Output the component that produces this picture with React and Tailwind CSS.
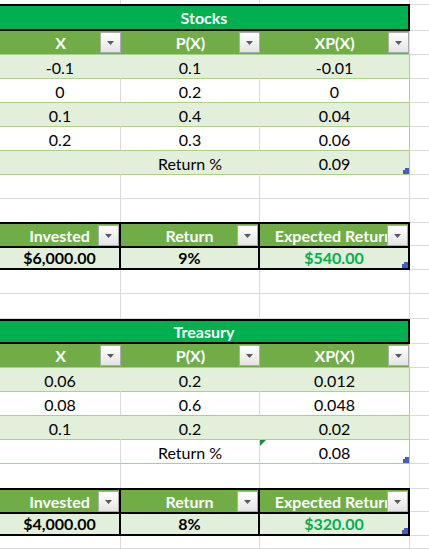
import React from 'react';

const W = ['w-[121px]', 'w-[139px]', 'w-[150px]'];

const stocks = [
  ['-0.1', '0.1', '-0.01'],
  ['0', '0.2', '0'],
  ['0.1', '0.4', '0.04'],
  ['0.2', '0.3', '0.06'],
  ['', 'Return %', '0.09'],
];

const treasury = [
  ['0.06', '0.2', '0.012'],
  ['0.08', '0.6', '0.048'],
  ['0.1', '0.2', '0.02'],
  ['', 'Return %', '0.08'],
];

// excel autofilter arrow button
const Drop = () => (
  <div className="absolute right-0 top-[1px] w-[21px] h-[21px] border border-[#acacac] bg-linear-to-b from-white to-[#e4e4e4] flex items-center justify-center">
    <svg width="7" height="4" viewBox="0 0 7 4">
      <polygon points="0,0 7,0 3.5,4" fill="#595959" />
    </svg>
  </div>
);

const Handle = () => (
  <svg className="absolute right-0 bottom-0" width="6" height="6" viewBox="0 0 6 6">
    <polygon points="2,0 6,0 6,6 0,6 0,2 2,2" fill="#4a5bbf" />
  </svg>
);

const Blank = ({ h = 'h-[24px]', line = true }) => {
  const b = line ? 'border-b' : '';
  return (
    <div className={`flex ${h}`}>
      <div className={`w-[121px] border-r ${b} border-[#dadada]`} />
      <div className={`w-[139px] border-r ${b} border-[#dadada]`} />
      <div className={`w-[150px] border-r ${b} border-[#dadada]`} />
      <div className={`flex-1 ${b} border-[#dadada]`} />
    </div>
  );
};

const Title = ({ label, h, top }) => (
  <div className={`flex ${h}`}>
    <div className="w-[410px] flex items-center justify-center bg-[#00b050] border-y-2 border-r-2 border-black text-white font-bold">
      {label}
    </div>
    <div className={`flex-1 border-b ${top ? 'border-t' : ''} border-[#dadada]`} />
  </div>
);

const Header = ({ cols }) => (
  <div className="flex h-[24px]">
    {cols.map((c, i) => (
      <div
        key={c}
        className={`${W[i]} relative flex items-center justify-center bg-[#70ad47] border-b border-b-[#a9d08e] text-white font-bold ${i === 2 ? 'border-r border-r-[#dadada]' : ''}`}
      >
        {c}
        <Drop />
      </div>
    ))}
    <div className="flex-1 border-b border-[#dadada]" />
  </div>
);

const DataRow = ({ vals, band, last, flag }) => {
  const bg = band ? 'bg-[#e2efda] border-r-[#e2efda]' : 'bg-white border-r-[#dadada]';
  return (
    <div className="flex h-[24px]">
      <div className={`w-[121px] flex items-end justify-center pb-[1px] border-r border-b border-b-[#a9d08e] ${bg}`}>{vals[0]}</div>
      <div className={`w-[139px] flex items-end justify-center pb-[1px] border-r border-b border-b-[#a9d08e] ${bg}`}>{vals[1]}</div>
      <div className={`w-[150px] relative flex items-end justify-center pb-[1px] border-r border-b border-[#a9d08e] ${band ? 'bg-[#e2efda]' : 'bg-white'}`}>
        {flag && (
          <svg className="absolute left-0 top-0" width="6" height="6" viewBox="0 0 6 6">
            <polygon points="0,0 6,0 0,6" fill="#1e8a3c" />
          </svg>
        )}
        {vals[2]}
        {last && <Handle />}
      </div>
      <div className="flex-1 border-b border-[#dadada]" />
    </div>
  );
};

const Invested = ({ amount, pct, ret }) => (
  <>
    <div className="flex h-[24px]">
      {['Invested', 'Return', 'Expected Return'].map((c, i) => (
        <div
          key={c}
          className={`${W[i]} relative overflow-hidden whitespace-nowrap flex items-center justify-center bg-[#70ad47] border-t-2 border-r-2 border-black text-white font-bold`}
        >
          {c}
          <Drop />
        </div>
      ))}
      <div className="flex-1 border-t border-b border-[#dadada]" />
    </div>
    <div className="flex h-[24px]">
      <div className="w-[121px] flex items-end justify-center pb-[1px] bg-[#e2efda] border-y-2 border-r-2 border-black font-bold">{amount}</div>
      <div className="w-[139px] flex items-end justify-center pb-[1px] bg-[#e2efda] border-y-2 border-r-2 border-black font-bold">{pct}</div>
      <div className="w-[150px] relative flex items-end justify-center pb-[1px] bg-[#e2efda] border-y-2 border-r-2 border-black font-bold text-[#00b050]">
        {ret}
        <Handle />
      </div>
      <div className="flex-1 border-b border-[#dadada]" />
    </div>
  </>
);

export default function App() {
  return (
    <div className="w-[429px] h-[549px] overflow-hidden bg-white text-black text-[16px] leading-[19px] font-[Lato,sans-serif]">
      <Blank h="h-[4px]" line={false} />
      <Title label="Stocks" h="h-[27px]" top />
      <Header cols={['X', 'P(X)', 'XP(X)']} />
      {stocks.map((r, i) => (
        <DataRow key={i} vals={r} band={i % 2 === 0} last={i === stocks.length - 1} />
      ))}
      <Blank />
      <Blank h="h-[23px]" line={false} />
      <Invested amount="$6,000.00" pct="9%" ret="$540.00" />
      <Blank />
      <Blank h="h-[25px]" />
      <Title label="Treasury" h="h-[25px]" />
      <Header cols={['X', 'P(X)', 'XP(X)']} />
      {treasury.map((r, i) => (
        <DataRow
          key={i}
          vals={r}
          band={i % 2 === 0}
          last={i === treasury.length - 1}
          flag={i === treasury.length - 1}
        />
      ))}
      <Blank line={false} />
      <Invested amount="$4,000.00" pct="8%" ret="$320.00" />
      <Blank h="h-[13px]" />
    </div>
  );
}
